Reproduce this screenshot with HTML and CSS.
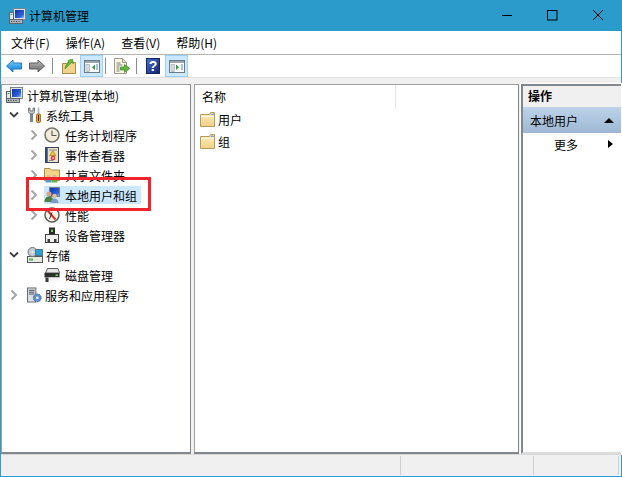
FILE: index.html
```html
<!DOCTYPE html>
<html lang="zh">
<head>
<meta charset="utf-8">
<title>计算机管理</title>
<link rel="stylesheet" href="styles.css">
</head>
<body>
<svg class="defs" width="0" height="0">
  <defs>
    <linearGradient id="blueArrow" x1="0" y1="0" x2="0" y2="1"><stop offset="0" stop-color="#8fd4fb"/><stop offset=".55" stop-color="#38a3ea"/><stop offset="1" stop-color="#1d78c9"/></linearGradient>
    <linearGradient id="grayArrow" x1="0" y1="0" x2="0" y2="1"><stop offset="0" stop-color="#c4c4c4"/><stop offset=".55" stop-color="#8c8c8c"/><stop offset="1" stop-color="#6c6c6c"/></linearGradient>
    <linearGradient id="helpBlue" x1="0" y1="0" x2="1" y2="1"><stop offset="0" stop-color="#4a6fc8"/><stop offset="1" stop-color="#14246e"/></linearGradient>
    <linearGradient id="folderFill" x1="0" y1="0" x2="0" y2="1"><stop offset="0" stop-color="#fff0c0"/><stop offset="1" stop-color="#f0cf84"/></linearGradient>
    <linearGradient id="screen" x1="0" y1="0" x2="1" y2="1"><stop offset="0" stop-color="#0f2fa8"/><stop offset=".7" stop-color="#2f62d8"/><stop offset="1" stop-color="#8fb8f0"/></linearGradient>
    <symbol id="computer" viewBox="0 0 17 16">
      <rect x="4.5" y="0.5" width="12" height="11" fill="#dfe4ea" stroke="#7b8390"/>
      <rect x="6" y="2" width="9" height="8" fill="url(#screen)"/>
      <rect x="0.5" y="4.5" width="4" height="7" fill="#e4e7e8" stroke="#5c646c"/>
      <rect x="1.5" y="6" width="2" height="1" fill="#3f9f4a"/>
      <rect x="0.5" y="11.5" width="13" height="4" fill="#aeb4ba" stroke="#5f666d"/>
      <path d="M2 13.5h1M4.5 13.5h1M7 13.5h1M9.5 13.5h1" stroke="#34393e"/>
    </symbol>
    <symbol id="chevR" viewBox="0 0 8 12"><path d="M1.5 1.5L6 6L1.5 10.5" fill="none" stroke="#a6a6a6" stroke-width="2"/></symbol>
    <symbol id="chevD" viewBox="0 0 10 8"><path d="M1 1.5L5 5.5L9 1.5" fill="none" stroke="#404040" stroke-width="1.8"/></symbol>
    <symbol id="folderSm" viewBox="0 0 15 15">
      <path d="M0.5 2.5H9.5L10.5 0.5H14.5V14.5H0.5Z" fill="url(#folderFill)" stroke="#b59c5c"/>
      <rect x="10.5" y="1.5" width="3.5" height="1.5" fill="#86aed2"/>
      <path d="M1 4.5H14" stroke="#fff8e0"/>
    </symbol>
  </defs>
</svg>
<div class="window">
  <header class="titlebar">
    <svg class="app-ico" viewBox="0 0 17 16"><use href="#computer"/></svg>
    <span class="title">计算机管理</span>
    <div class="winbtns">
      <svg class="winbtn" viewBox="0 0 46 30"><path d="M18 15.5h10" stroke="#000" fill="none"/></svg>
      <svg class="winbtn" viewBox="0 0 46 30"><rect x="17.5" y="10.5" width="9.5" height="9.5" stroke="#000" fill="none"/></svg>
      <svg class="winbtn" viewBox="0 0 46 30"><path d="M17 10l10 10M27 10l-10 10" stroke="#000" fill="none"/></svg>
    </div>
  </header>
  <nav class="menubar">
    <span class="menu">文件(F)</span><span class="menu">操作(A)</span><span class="menu">查看(V)</span><span class="menu">帮助(H)</span>
  </nav>
  <div class="toolbar">
    <span class="tb"><svg class="ico16" viewBox="0 0 16 16"><path d="M0.5 8L7 2V5H15.5V11H7V14Z" fill="url(#blueArrow)" stroke="#2a78b8"/></svg></span>
    <span class="tb"><svg class="ico16" viewBox="0 0 16 16"><path d="M15.5 8L9 2V5H0.5V11H9V14Z" fill="url(#grayArrow)" stroke="#5c5c5c"/></svg></span>
    <span class="tbsep s-a"></span>
    <span class="tb"><svg class="ico16" viewBox="0 0 16 16"><path d="M1.5 5.5H5.5L7 4.5H14.5V15.5H1.5Z" fill="#f0d48c" stroke="#a98c4e"/><path d="M4 11C4 8 5.5 5.5 8 4.5L7 2.5L11.5 1L12.5 5.5L10.5 4.8C8 7 6.5 8.5 4 11Z" fill="#66b83a" stroke="#3d8a25" stroke-width=".6"/></svg></span>
    <span class="tb on"><svg class="ico16" viewBox="0 0 16 16"><rect x="0.5" y="2.5" width="15" height="12" fill="#fff" stroke="#6d7b87"/><rect x="1" y="3" width="14" height="2" fill="#9aa6ae"/><rect x="2" y="6.5" width="3.5" height="7" fill="#d5dce1" stroke="#8d979f" stroke-width=".5"/><path d="M11 6.5V12L8 9.2Z" fill="#2f9e3f"/><path d="M12 7h2M12 9h2M12 11h2" stroke="#4f88c0"/></svg></span>
    <span class="tbsep s-b"></span>
    <span class="tb"><svg class="ico16" viewBox="0 0 16 16"><path d="M0.5 0.5H8.5L12.5 4.5V15.5H0.5Z" fill="#fbf7e6" stroke="#a09c8a"/><path d="M8.5 0.5V4.5H12.5" fill="#e4e0cc" stroke="#a09c8a"/><path d="M2.5 5h4M2.5 7h6M2.5 9h3M2.5 11h3M2.5 13h3" stroke="#7e7e70"/><path d="M6.5 9H10.5V6.5L15.8 10.5L10.5 14.5V12H6.5Z" fill="#62b83c" stroke="#34852a" stroke-width=".7"/></svg></span>
    <span class="tbsep s-c"></span>
    <span class="tb"><svg class="help" viewBox="0 0 14 16"><rect x="0.5" y="0.5" width="13" height="15" fill="url(#helpBlue)" stroke="#14245f"/><text x="7" y="13" class="qmark">?</text></svg></span>
    <span class="tb on s-d"><svg class="ico16" viewBox="0 0 16 16"><rect x="0.5" y="2.5" width="15" height="12" fill="#fff" stroke="#6d7b87"/><rect x="1" y="3" width="14" height="2" fill="#9aa6ae"/><rect x="2" y="6.5" width="3.5" height="7" fill="#d5dce1" stroke="#8d979f" stroke-width=".5"/><path d="M7 6.5V12L10 9.2Z" fill="#2f9e3f"/><path d="M12 7h2M12 9h2M12 11h2" stroke="#4f88c0"/></svg></span>
  </div>
  <main class="panes">
    <section class="pane tree">
      <div class="row l0"><svg class="ico17" viewBox="0 0 17 16"><use href="#computer"/></svg><span class="lbl">计算机管理(本地)</span></div>
      <div class="row l1"><svg class="tw" viewBox="0 0 10 8"><use href="#chevD"/></svg><svg class="ico16" viewBox="0 0 16 16"><path d="M4.5 5V15" stroke="#7e858c" stroke-width="3"/><path d="M1.5 1V4.5C1.5 6 3 7 4.5 7S7.5 6 7.5 4.5V1L6 1V4H3V1Z" fill="#c8ccd0" stroke="#5a6066" stroke-width=".8"/><path d="M11.5 0.5V7" stroke="#aeb3b8" stroke-width="1.6"/><rect x="9.5" y="7" width="4" height="8.5" rx="1" fill="#eaa915" stroke="#7a5208" stroke-width=".7"/><path d="M11.5 8V14" stroke="#3a2a08"/></svg><span class="lbl">系统工具</span></div>
      <div class="row l2"><svg class="tr" viewBox="0 0 8 12"><use href="#chevR"/></svg><svg class="ico16" viewBox="0 0 16 16"><circle cx="8" cy="8" r="7" fill="#f2ecd8" stroke="#72726c" stroke-width="1.6"/><path d="M8 3.5V8.5H12.5" fill="none" stroke="#55554f" stroke-width="1.1"/></svg><span class="lbl">任务计划程序</span></div>
      <div class="row l2"><svg class="tr" viewBox="0 0 8 12"><use href="#chevR"/></svg><svg class="ico16" viewBox="0 0 16 16"><rect x="1.5" y="0.5" width="13" height="15" fill="#e9e2c8" stroke="#3b4560"/><path d="M2.5 1V15" stroke="#2f4a7a" stroke-width="2.4"/><path d="M5 3h8M5 13.5h4" stroke="#8a8a80"/><path d="M8.8 3.5L12 8.5H5.6Z" fill="#ecc032" stroke="#8a6a10" stroke-width=".5"/><circle cx="9" cy="11" r="2.4" fill="#d9413a"/><path d="M8 11h2" stroke="#fff"/></svg><span class="lbl">事件查看器</span></div>
      <div class="row l2"><svg class="tr" viewBox="0 0 8 12"><use href="#chevR"/></svg><svg class="ico16" viewBox="0 0 16 16"><path d="M0.5 1.5H6L7.5 3H15.5V13.5H0.5Z" fill="#f0d489" stroke="#a98c4e"/><circle cx="4.5" cy="10" r="2" fill="#e0b890"/><path d="M1.5 15.5C1.5 13 3 12 4.5 12S7.5 13 7.5 15.5Z" fill="#4f9ad0"/><circle cx="10.5" cy="9.5" r="2" fill="#e0b890"/><path d="M7.5 15.5C7.5 13 9 11.5 10.5 11.5S13.5 13 13.5 15.5Z" fill="#5fae48"/></svg><span class="lbl">共享文件夹</span></div>
      <div class="row l2"><svg class="tr" viewBox="0 0 8 12"><use href="#chevR"/></svg><span class="sel"><svg class="ico16" viewBox="0 0 16 16"><rect x="5.5" y="0.5" width="10" height="9" fill="url(#screen)" stroke="#74808c"/><circle cx="5" cy="7" r="2.5" fill="#d8a878"/><path d="M0.5 15C0.5 11 2.5 9.5 5 9.5S9.5 11 9.5 15Z" fill="#4f7f3f"/><circle cx="10.5" cy="9" r="2.3" fill="#e6c09a"/><path d="M6.5 16C6.5 13 8.5 11.5 10.5 11.5S14.5 13 14.5 16Z" fill="#7b9cc6"/></svg><span class="lbl">本地用户和组</span></span></div>
      <div class="row l2"><svg class="tr" viewBox="0 0 8 12"><use href="#chevR"/></svg><svg class="ico16" viewBox="0 0 16 16"><circle cx="8" cy="8" r="7" fill="#f6f2e6" stroke="#5e5e58" stroke-width="1.5"/><path d="M3.5 3.5L11.5 12.5" stroke="#cf2f28" stroke-width="2"/><path d="M5.5 12L8 5.5" stroke="#303030"/></svg><span class="lbl">性能</span></div>
      <div class="row l2 noarrow"><svg class="ico16" viewBox="0 0 16 16"><rect x="5" y="0.5" width="6" height="7" fill="#2a2a2a"/><rect x="7" y="2.5" width="2" height="2.5" fill="#73c45c"/><rect x="1.5" y="7.5" width="13" height="8" fill="#f0f0f0" stroke="#3e3e3e"/><rect x="3.5" y="12" width="2.5" height="3" fill="#3e3e3e"/><rect x="10" y="12" width="2.5" height="3" fill="#3e3e3e"/></svg><span class="lbl">设备管理器</span></div>
      <div class="row l1"><svg class="tw" viewBox="0 0 10 8"><use href="#chevD"/></svg><svg class="ico16" viewBox="0 0 16 16"><rect x="0.5" y="9.5" width="15" height="6" fill="#e6eae2" stroke="#50565a"/><rect x="2" y="11.5" width="4" height="2" fill="#5cab4a"/><circle cx="5.5" cy="5" r="4.5" fill="#c7ccd0" stroke="#70767c"/><circle cx="5.5" cy="5" r="1.2" fill="#f4f6f6"/><rect x="8.5" y="2.5" width="7" height="6" fill="#29a0d6" stroke="#4f7a8c"/></svg><span class="lbl">存储</span></div>
      <div class="row l2 noarrow"><svg class="ico16" viewBox="0 0 16 16"><path d="M3.5 1.5H14L15.5 6H1.5Z" fill="#e6e6e6" stroke="#5a5a5a"/><rect x="0.5" y="6" width="15" height="4.5" fill="#2e2e2e"/><rect x="11.5" y="7.5" width="2.5" height="1.5" fill="#6ed35c"/><rect x="1" y="10.5" width="14" height="3" fill="#f2f2f2"/><rect x="1.5" y="10.5" width="3" height="4.5" fill="#3a3a3a"/></svg><span class="lbl">磁盘管理</span></div>
      <div class="row l1"><svg class="tr" viewBox="0 0 8 12"><use href="#chevR"/></svg><svg class="ico16 svc" viewBox="0 0 16 16"><rect x="0.5" y="0.5" width="9" height="15" fill="#dde0e3" stroke="#5d646c"/><path d="M2 3h6M2 5h6M2 7h6" stroke="#3d4852"/><circle cx="11" cy="11" r="4.2" fill="#5f8fc9" stroke="#3c6aa5" stroke-dasharray="1.6 1"/><circle cx="11" cy="11" r="1.4" fill="#fff"/></svg><span class="lbl">服务和应用程序</span></div>
    </section>
    <section class="pane list">
      <div class="list-head"><span class="col">名称</span></div>
      <div class="item"><svg class="folder" viewBox="0 0 15 15"><use href="#folderSm"/></svg><span>用户</span></div>
      <div class="item"><svg class="folder" viewBox="0 0 15 15"><use href="#folderSm"/></svg><span>组</span></div>
    </section>
    <aside class="actions">
      <div class="act-head">操作</div>
      <div class="act-group"><span>本地用户</span><i class="up"></i></div>
      <div class="act-item"><span>更多</span><i class="right"></i></div>
    </aside>
  </main>
  <footer class="status"><span class="seg s1"></span><span class="seg s2"></span><span class="seg s3"></span></footer>
  <div class="mark"></div>
</div>
</body>
</html>
```
FILE: styles.css
```css
* { box-sizing: border-box; }
html, body { margin: 0; padding: 0; }
body { width: 622px; height: 477px; overflow: hidden; font: 12px "Noto Sans CJK SC", "Liberation Sans", sans-serif; color: #000; }
.defs { position: absolute; }
.window { position: relative; width: 622px; height: 477px; display: flex; flex-direction: column; background: #f0f0f0; border: 1px solid #2b9bd2; border-top: 0; }
svg { display: block; flex: none; overflow: visible; }
.ico16 { width: 16px; height: 16px; }
.ico17 { width: 17px; height: 16px; }
.titlebar { height: 31px; flex: none; background: #2b9bcb; display: flex; align-items: center; padding-left: 9px; margin: 0 -1px; }
.app-ico { width: 17px; height: 16px; }
.title { margin-left: 3px; font-size: 12px; }
.winbtns { margin-left: auto; display: flex; margin-top: -1px; }
.winbtn { width: 46px; height: 30px; }
.menubar { height: 24px; flex: none; background: #fff; border-bottom: 1px solid #b4b4b4; display: flex; align-items: center; padding-left: 2px; }
.menu { padding: 0 8px; }
.toolbar { height: 23px; flex: none; background: #fff; border-bottom: 1px solid #e2e2e2; display: flex; align-items: center; padding-left: 1px; }
.tb { width: 23px; height: 22px; display: flex; align-items: center; justify-content: center; border: 1px solid transparent; }
.tb.on { background: #cce8ff; border-color: #99d1ff; }
.tbsep { width: 1px; height: 16px; background: #8c8c8c; }
.s-a { margin: 0 4px; }
.s-b { margin: 0 4px 0 2px; }
.s-c { margin: 0 4px 0 3px; }
.s-d { margin-left: 1px; }
.help { width: 14px; height: 16px; }
.qmark { font: bold 14px "Liberation Sans", sans-serif; fill: #fff; text-anchor: middle; }
.panes { flex: 1; display: flex; padding-top: 6px; gap: 3px; min-height: 0; }
.pane { background: #fff; border: 1px solid #82878c; border-width: 1px 1px 2px 1px; border-top-color: #a0a0a0; border-left-color: #a0a0a0; }
.tree { width: 190px; }
.list { width: 325px; }
.row { height: 20px; display: flex; align-items: center; }
.l0 { padding-left: 4px; }
.l0 .lbl { margin-left: 4px; }
.l1 { padding-left: 7px; }
.l2 { padding-left: 28px; }
.noarrow { padding-left: 42px; }
.tw { width: 10px; height: 8px; margin-right: 8px; }
.tr { width: 8px; height: 12px; margin-right: 6px; }
.l1 .tr { margin-left: 1px; margin-right: 9px; }
.l1 .ico16 { margin-right: 3px; }
.l1 .svc { width: 15px; }
.l2 .ico16 { margin-right: 5px; }
.sel { display: flex; align-items: center; background: #cce8ff; height: 18px; margin-left: 0; padding-right: 4px; }
.sel .ico16 { margin-right: 5px; }
.list-head { height: 23px; display: flex; align-items: flex-start; }
.col { width: 201px; height: 23px; padding-left: 7px; line-height: 24px; border-right: 1px solid #e5e5e5; }
.item { height: 22px; display: flex; align-items: center; padding-left: 5px; gap: 3px; }
.folder { width: 15px; height: 15px; }
.actions { flex: 1; margin-left: -1px; background: #fff; border: 2px solid #82878c; border-width: 2px 0 0 2px; outline: 1px solid #fff; border-bottom: 2px solid #dcdcdc; }
.act-head { height: 21px; background: #f0f0f0; font-weight: 700; line-height: 20px; padding-left: 5px; font-size: 12px; }
.act-group { height: 26px; background: linear-gradient(#bdd3ea, #9db7d3); display: flex; align-items: center; padding-left: 7px; }
.up { margin-left: auto; margin-right: 7px; border: 5px solid transparent; border-top: 0; border-bottom: 5px solid #000; }
.act-item { height: 22px; display: flex; align-items: center; padding-left: 31px; }
.right { margin-left: auto; margin-right: 8px; border: 4px solid transparent; border-right: 0; border-left: 5px solid #000; }
.status { height: 22px; flex: none; display: flex; border-top: 1px solid #d8d8d8; padding: 1px 0; }
.seg { border-right: 1px solid #d0d0d0; }
.s1 { width: 400px; }
.s2 { width: 133px; }
.s3 { width: 85px; }
.mark { position: absolute; left: 25px; top: 177px; width: 125px; height: 34px; border: 3px solid #f0242c; }
```
